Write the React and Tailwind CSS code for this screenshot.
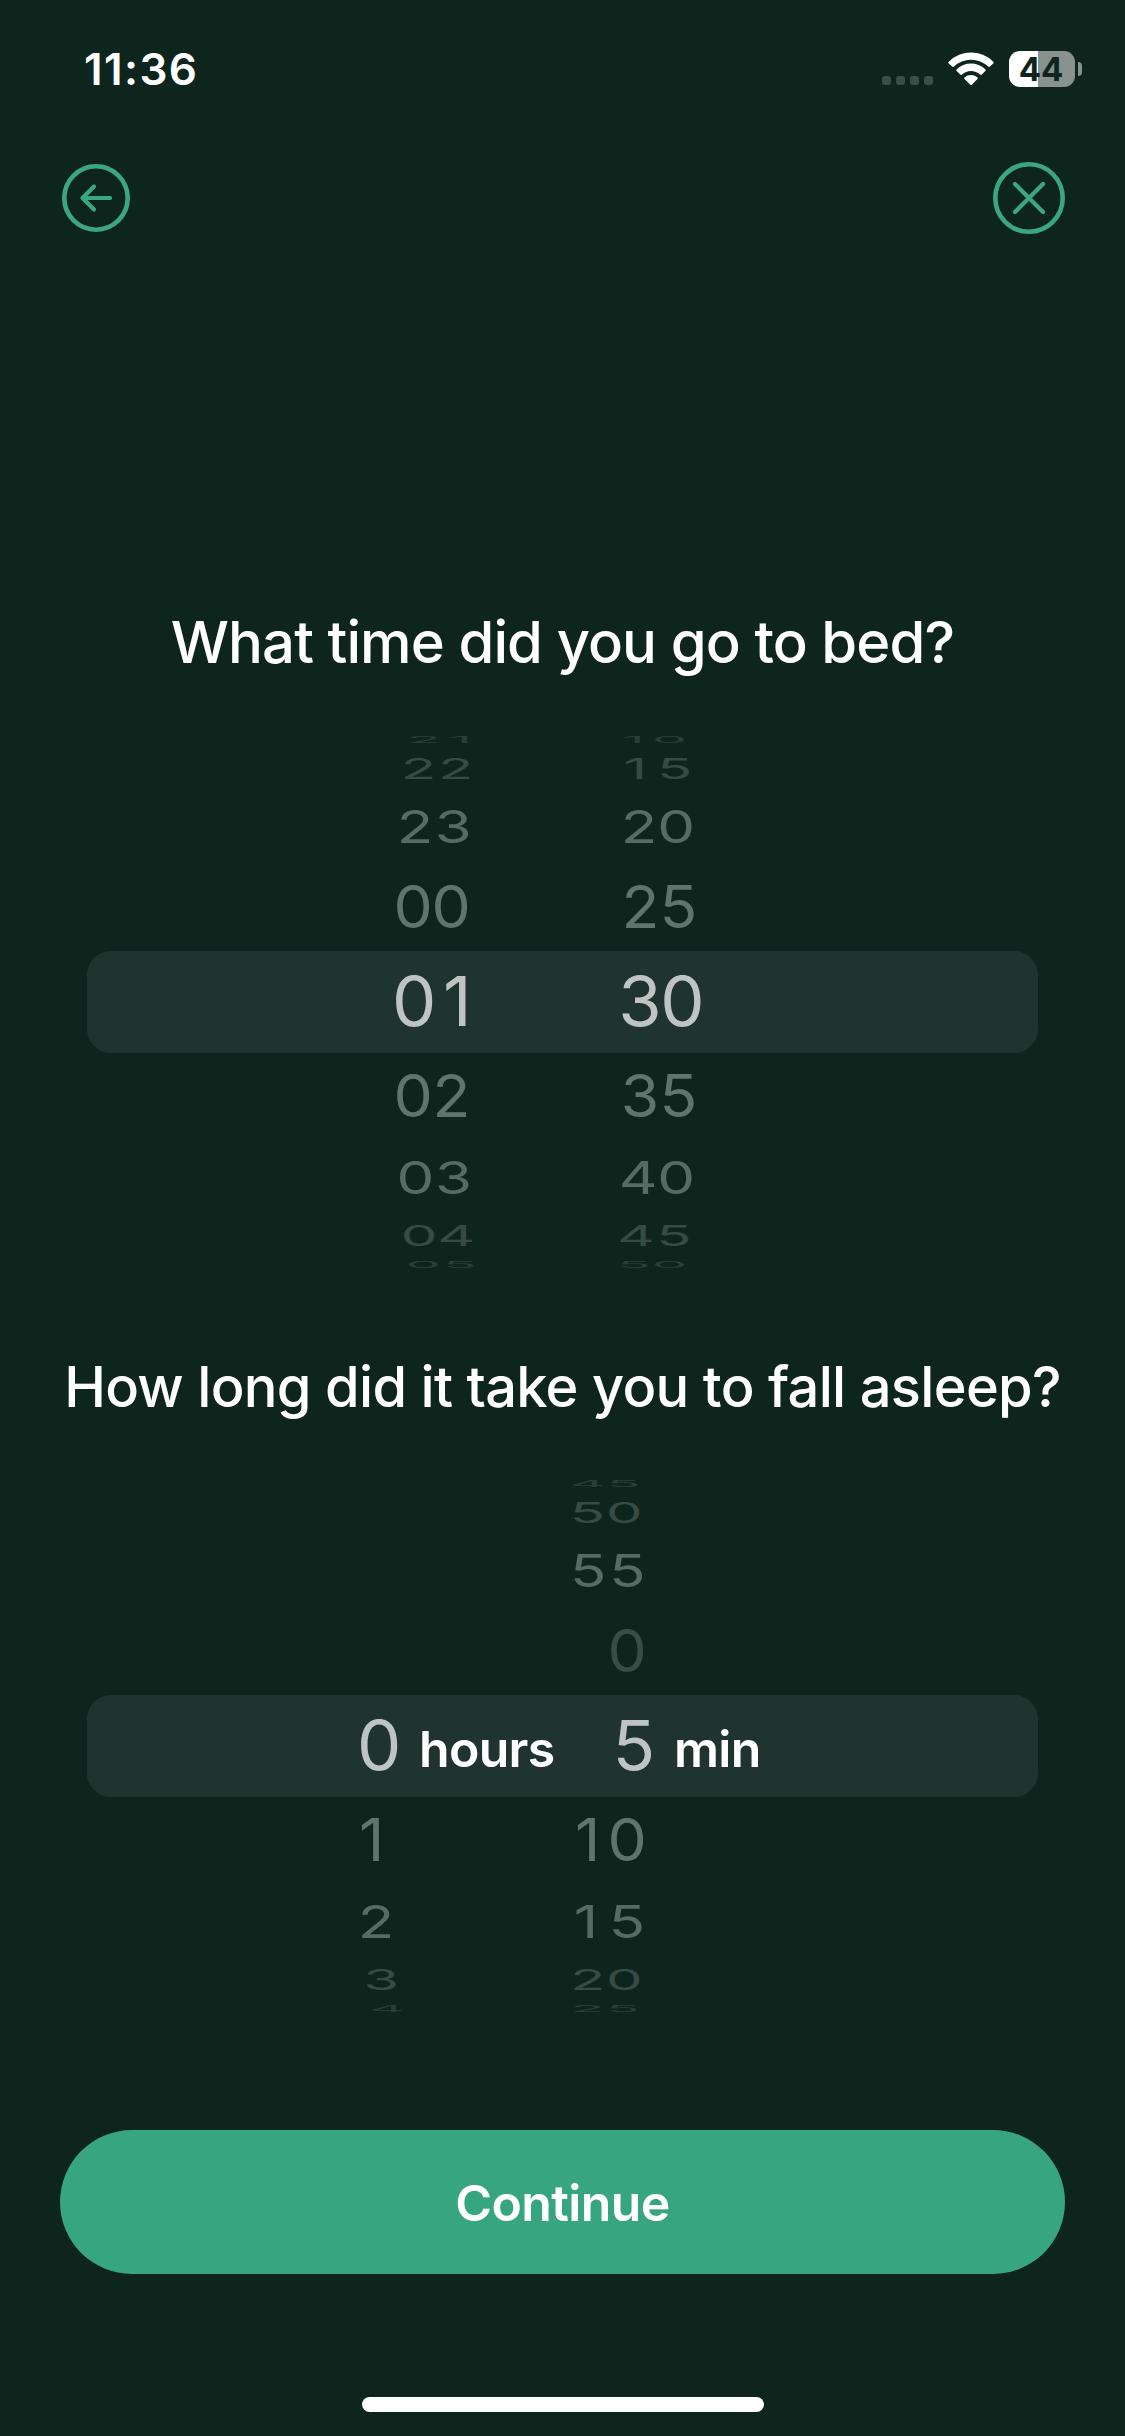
// tone, digit width and vertical squeeze of each row of the wheel, top to bottom
const rows = [
  { box: 'h-[17px] text-[#283f37]', digit: 29, sy: 0.13 },
  { box: 'h-[41px] text-[#364b44]', digit: 30.3, sy: 0.42 },
  { box: 'h-[75px] text-[#566b63]', digit: 31.3, sy: 0.66 },
  { box: 'h-[87px] text-[#5f746c]', digit: 32.5, sy: 0.85 },
  { box: 'h-[102px] text-[#bec4c2]', digit: 36.7, sy: 1 },
  { box: 'h-[87px] text-[#5f746c]', digit: 32.5, sy: 0.85 },
  { box: 'h-[75px] text-[#566b63]', digit: 31.3, sy: 0.66 },
  { box: 'h-[41px] text-[#364b44]', digit: 30.3, sy: 0.42 },
  { box: 'h-[17px] text-[#283f37]', digit: 29, sy: 0.13 },
];

// [text, left edge, right edge]
const bedHours = [
  ['21', 411, 467], ['22', 405, 470], ['23', 401, 468.7], ['00', 397, 467.7], ['01', 396, 465.5],
  ['02', 397, 466.7], ['03', 400, 469], ['04', 404, 472], ['05', 409, 473.3],
];
const bedMinutes = [
  ['10', 624.3, 684.3], ['15', 626, 689], ['20', 625, 692], ['25', 626, 693.7], ['30', 622.3, 701],
  ['35', 624.3, 693.7], ['40', 622.3, 692], ['45', 620.7, 688.3], ['50', 621, 684.3],
];
const sleepHours = [
  null, null, null, null, ['0', 361],
  ['1', 361.7], ['2', 362], ['3', 366.7], ['4', 372],
];
const sleepMinutes = [
  ['45', 572.7, 637.3], ['50', 574, 639.7], ['55', 574.3, 642.3], ['0', 611, 0, 'text-[#384d46]'], ['5', 617.7],
  ['10', 577.7, 643.7], ['15', 576.3, 641.7], ['20', 574.3, 639.7], ['25', 574.3, 636.7],
];

const ctx = document.createElement('canvas').getContext('2d');

function measure(text) {
  ctx.font = '400 69px Inter, sans-serif';
  const m = ctx.measureText(text);
  return { left: -m.actualBoundingBoxLeft, width: m.actualBoundingBoxRight + m.actualBoundingBoxLeft };
}

// place the digits between their two edges on the drum
function digitStyle([text, left, right], row) {
  const sx = row.digit / measure('0').width;
  const ink = measure(text);
  const spacing = right ? (right - left) / sx - ink.width : 0;
  return {
    letterSpacing: `${spacing}px`,
    transform: `translateX(${left - ink.left * sx}px) scale(${sx}, ${row.sy})`,
  };
}

function Column({ items }) {
  return (
    <div className="flex w-0 flex-col justify-center">
      {rows.map((row, idx) => {
        const item = items[idx];
        return (
          <div key={idx} className={`flex shrink-0 items-center ${row.box}`}>
            {item && (
              <span
                className={`origin-left whitespace-nowrap text-[69px] leading-none ${item[3] || ''}`}
                style={digitStyle(item, row)}
              >
                {item[0]}
              </span>
            )}
          </div>
        );
      })}
    </div>
  );
}

function Wheel({ columns, children }) {
  return (
    <div className="relative flex h-[529px]">
      {/* selected row */}
      <div className="absolute left-[87px] top-[214px] h-[102px] w-[951px] rounded-[24px] bg-[#20342f]" />
      <div className="relative flex">
        {columns.map((items, idx) => (
          <Column key={idx} items={items} />
        ))}
      </div>
      {children}
    </div>
  );
}

function StatusBar() {
  return (
    <div className="flex h-[138px] items-start justify-between pl-[84px] pr-[43px]">
      <span className="mt-[43px] text-[44px] font-semibold leading-[52px] tracking-[1.4px]">11:36</span>
      <div className="mt-[51px] flex h-9 items-start">
        <div className="mt-[25px] flex gap-[5px]">
          <i className="size-[9px] rounded-[3px] bg-[#3b4f48]" />
          <i className="size-[9px] rounded-[3px] bg-[#3b4f48]" />
          <i className="size-[9px] rounded-[3px] bg-[#3b4f48]" />
          <i className="size-[9px] rounded-[3px] bg-[#3b4f48]" />
        </div>
        {/* wifi */}
        <svg className="ml-[15px] mt-px h-[33px] w-[46px]" viewBox="0 0 46 33" fill="#fff">
          <path d="M1 9.4a31.5 31.5 0 0 1 44 0c.9.8.9 1.3.2 2l-3.3 3.2c-.6.6-1.2.6-1.8 0a24.6 24.6 0 0 0-34.2 0c-.6.6-1.2.6-1.8 0L.8 11.400c-.7-.7-.7-1.200.2-2z" />
          <path d="M8.8 17.3a20.4 20.4 0 0 1 28.4 0c.7.7.7 1.2.1 1.8l-3.5 3.5c-.6.6-1.1.6-1.8 0a13.3 13.3 0 0 0-18 0c-.7.6-1.2.6-1.8 0l-3.5-3.5c-.6-.6-.6-1.1.1-1.8z" />
          <path d="M16.7 25.3a9.8 9.8 0 0 1 12.6 0c.7.6.7 1.1.1 1.7l-5.400 5.400c-.7.7-1.3.7-2 0L16.600 27c-.6-.6-.6-1.1.1-1.7z" />
        </svg>
        {/* battery */}
        <div className="ml-[15px] flex h-9 w-[66px] items-center justify-center rounded-[11px] bg-[linear-gradient(90deg,#fff_29px,#87928e_29px)] pr-[2px] text-[33px] font-bold leading-none text-[#0e251e]">
          44
        </div>
        <i className="ml-[3px] mt-[11px] h-[14px] w-1 rounded-r-full bg-[#87928e]" />
      </div>
    </div>
  );
}

export default function App() {
  return (
    <div className="flex h-[2436px] w-[1125px] flex-col overflow-hidden bg-[#0e251e] font-['Inter',sans-serif] text-white">
      <StatusBar />

      {/* navigation */}
      <div className="flex h-[120px] items-center justify-between pl-[62px] pr-[60px]">
        <svg className="size-[68px]" viewBox="0 0 68 68" fill="none" stroke="#3ba682" strokeLinecap="round" strokeLinejoin="round">
          <circle cx="34" cy="34" r="31.7" strokeWidth="4.6" />
          <path d="M48 34H20.5M32 22.500L20.500 34L32 45.500" strokeWidth="4.2" />
        </svg>
        <svg className="size-[72px]" viewBox="0 0 72 72" fill="none" stroke="#3ba682" strokeLinecap="round">
          <circle cx="36" cy="36" r="33.7" strokeWidth="4.6" />
          <path d="M22 22L50 50M50 22L22 50" strokeWidth="4.2" />
        </svg>
      </div>

      <h1 className="mt-[348px] whitespace-nowrap text-center text-[58px] font-medium leading-[72px] tracking-[-0.9px]">
        What time did you go to bed?
      </h1>
      <div className="mt-[59px]">
        <Wheel columns={[bedHours, bedMinutes]} />
      </div>

      <h2 className="mt-[86px] whitespace-nowrap text-center text-[56px] font-medium leading-[70px] tracking-[-0.7px]">
        How long did it take you to fall asleep?
      </h2>
      <div className="mt-[59px]">
        <Wheel columns={[sleepHours, sleepMinutes]}>
          <div className="relative flex items-center pl-[419px] pt-[7px] text-[50px] font-semibold leading-none tracking-[-0.7px]">
            <span className="w-[255px]">hours</span>
            <span>min</span>
          </div>
        </Wheel>
      </div>

      <button className="mx-[60px] mt-[120px] h-36 rounded-full bg-[#37a57f] pt-[2px] text-[50px] font-semibold tracking-[-0.6px]">
        Continue
      </button>

      {/* home indicator */}
      <div className="mx-auto mt-[123px] h-[15px] w-[402px] rounded-full bg-white" />
    </div>
  );
}
